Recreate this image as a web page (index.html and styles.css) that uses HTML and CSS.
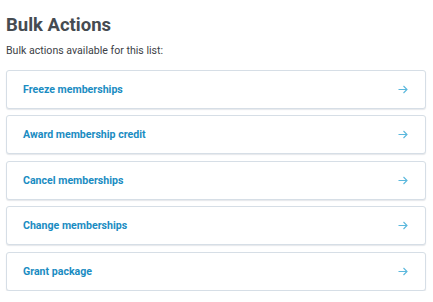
FILE: index.html
```html
<!DOCTYPE html>
<html>
<head>
<meta charset="utf-8">
<link rel="stylesheet" href="styles.css">
</head>
<body>
<div class="page">
  <h1 class="title">Bulk Actions</h1>
  <p class="subtitle">Bulk actions available for this list:</p>
  <ul class="actions">
    <li class="action"><span class="label">Freeze memberships</span><svg class="arrow" viewBox="0 0 10 9" width="10" height="9"><path d="M0.5 4.5H9M5.5 1L9 4.5L5.5 8" fill="none" stroke="#5bb8dd" stroke-width="1.1"/></svg></li>
    <li class="action"><span class="label">Award membership credit</span><svg class="arrow" viewBox="0 0 10 9" width="10" height="9"><path d="M0.5 4.5H9M5.5 1L9 4.5L5.5 8" fill="none" stroke="#5bb8dd" stroke-width="1.1"/></svg></li>
    <li class="action"><span class="label">Cancel memberships</span><svg class="arrow" viewBox="0 0 10 9" width="10" height="9"><path d="M0.5 4.5H9M5.5 1L9 4.5L5.5 8" fill="none" stroke="#5bb8dd" stroke-width="1.1"/></svg></li>
    <li class="action"><span class="label">Change memberships</span><svg class="arrow" viewBox="0 0 10 9" width="10" height="9"><path d="M0.5 4.5H9M5.5 1L9 4.5L5.5 8" fill="none" stroke="#5bb8dd" stroke-width="1.1"/></svg></li>
    <li class="action"><span class="label">Grant package</span><svg class="arrow" viewBox="0 0 10 9" width="10" height="9"><path d="M0.5 4.5H9M5.5 1L9 4.5L5.5 8" fill="none" stroke="#5bb8dd" stroke-width="1.1"/></svg></li>
  </ul>
</div>
</body>
</html>
```
FILE: styles.css
```css
html, body {
  margin: 0;
  padding: 0;
  background: #ffffff;
}
body {
  font-family: Roboto, "Liberation Sans", Arial, sans-serif;
}
.page {
  padding: 14px 7px 0 6px;
}
.title {
  margin: 0;
  font-size: 18.5px;
  line-height: 22px;
  font-weight: 700;
  color: #464b51;
}
.subtitle {
  margin: 8px 0 0 0;
  font-size: 10.6px;
  line-height: 14px;
  color: #3c4146;
}
.actions {
  list-style: none;
  margin: 12px 0 0 0;
  padding: 0;
  display: flex;
  flex-direction: column;
  gap: 6.4px;
}
.action {
  box-sizing: border-box;
  display: flex;
  align-items: center;
  justify-content: space-between;
  height: 39px;
  padding: 0 17px 0 16px;
  border: 1px solid #d6dee6;
  border-radius: 3px;
  box-shadow: 0 1px 1px rgba(40, 60, 80, 0.12);
  background: #fff;
}
.label {
  font-size: 10.6px;
  font-weight: 700;
  color: #1a8cc2;
}
.arrow {
  display: block;
}
```
